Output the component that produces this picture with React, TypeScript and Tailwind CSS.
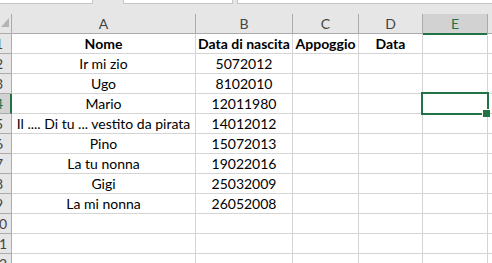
import React from "react";

const rows: [string, string, string, string][] = [
  ["Nome", "Data di nascita", "Appoggio", "Data"],
  ["Ir mi zio", "5072012", "", ""],
  ["Ugo", "8102010", "", ""],
  ["Mario", "12011980", "", ""],
  ["Il .... Di tu ... vestito da pirata", "14012012", "", ""],
  ["Pino", "15072013", "", ""],
  ["La tu nonna", "19022016", "", ""],
  ["Gigi", "25032009", "", ""],
  ["La mi nonna", "26052008", "", ""],
  ["", "", "", ""],
  ["", "", "", ""],
  ["", "", "", ""],
];

const font = { fontFamily: "Lato, 'Open Sans', sans-serif" };

export default function App() {
  return (
    <div
      className="relative w-[492px] h-[263px] overflow-hidden bg-white text-[14px] text-black"
      style={font}
    >
      {/* top formula bar remnants */}
      <div className="h-[14px] bg-[#e6e6e6] flex items-start">
        <div className="w-[93px] h-[4px] bg-white border-b border-r border-[#c6c6c6]" />
        <div className="w-[30px]" />
        <div className="w-[110px] h-[4px] bg-white border-b border-l border-r border-[#c6c6c6]" />
        <div className="w-[4px]" />
        <div className="flex-1 h-[4px] bg-white border-b border-l border-[#c6c6c6]" />
      </div>

      {/* column header */}
      <div className="flex h-[20px] bg-[#e6e6e6] border-b border-[#ababab] text-[#444] text-[14px] leading-none">
        <div className="relative w-[12px] border-r border-[#ababab]">
          <svg className="absolute left-[1px] top-[4px]" width="8" height="9" viewBox="0 0 8 9">
            <polygon points="8,0 8,9 0,9" fill="#b4b4b4" />
          </svg>
        </div>
        <div className="w-[184px] border-r border-[#ababab] flex items-center justify-center">A</div>
        <div className="w-[97px] border-r border-[#ababab] flex items-center justify-center">B</div>
        <div className="w-[66px] border-r border-[#ababab] flex items-center justify-center">C</div>
        <div className="w-[64px] border-r border-[#ababab] flex items-center justify-center">D</div>
        <div className="w-[65px] h-[21px] -mb-[1px] bg-[#d2d2d2] border-r border-[#ababab] border-b-2 border-b-[#217346] flex items-center justify-center text-[#217346]">
          E
        </div>
        <div className="flex-1" />
      </div>

      {/* data rows */}
      {rows.map((r, i) => {
        const n = i + 1;
        const sel = n === 4;
        return (
          <div key={i} className="flex h-[20px]">
            <div
              className={
                "w-[12px] overflow-hidden border-b border-b-[#ababab] flex items-end pb-[2px] leading-none " +
                (sel
                  ? "bg-[#d2d2d2] border-r-2 border-r-[#217346] text-[#217346]"
                  : "bg-[#e6e6e6] border-r border-r-[#ababab] text-[#444]")
              }
            >
              <div className="shrink-0 w-[24px] ml-[-13px] text-center">{n}</div>
            </div>
            {[184, 97, 66, 64, 65].map((w, j) => (
              <div
                key={j}
                style={{ width: w }}
                className={
                  "shrink-0 border-r border-b border-[#d4d4d4] flex items-end justify-center pb-[1px] leading-[16px] whitespace-nowrap " +
                  (n === 1 ? "font-bold" : "")
                }
              >
                {j < 4 ? r[j] : ""}
              </div>
            ))}
            <div className="flex-1 border-b border-[#d4d4d4]" />
          </div>
        );
      })}

      {/* selection */}
      <div className="absolute left-[421px] top-[92px] w-[68px] h-[23px] border-2 border-[#217346]" />
      <div className="absolute left-[482px] top-[109px] w-[8px] h-[8px] bg-[#217346] border-l border-t border-white" />
    </div>
  );
}
